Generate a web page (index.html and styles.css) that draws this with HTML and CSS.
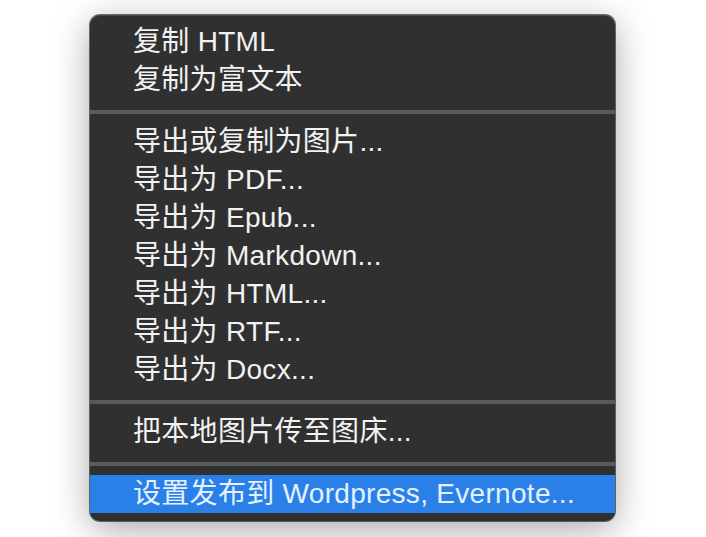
FILE: index.html
```html
<!DOCTYPE html>
<html lang="zh-CN">
<head>
<meta charset="utf-8">
<title>Menu</title>
<link rel="stylesheet" href="styles.css">
</head>
<body>
<div class="stage">
  <div class="menu">
    <div class="item">复制 HTML</div>
    <div class="item">复制为富文本</div>
    <div class="sep"></div>
    <div class="item">导出或复制为图片...</div>
    <div class="item">导出为 PDF...</div>
    <div class="item">导出为 Epub...</div>
    <div class="item">导出为 Markdown...</div>
    <div class="item">导出为 HTML...</div>
    <div class="item">导出为 RTF...</div>
    <div class="item">导出为 Docx...</div>
    <div class="sep"></div>
    <div class="item">把本地图片传至图床...</div>
    <div class="sep"></div>
    <div class="item active">设置发布到 Wordpress, Evernote...</div>
  </div>
</div>
</body>
</html>
```

FILE: styles.css
```css
html, body {
  margin: 0;
  padding: 0;
  background: #ffffff;
}
.stage {
  width: 706px;
  height: 537px;
  padding: 15px 0 0 90px;
  box-sizing: border-box;
  overflow: hidden;
}
.menu {
  width: 525px;
  padding: 8px 0;
  background: #303030;
  border-radius: 10px;
  box-shadow: 0 0 0 1px rgba(0,0,0,0.55), inset 0 1px 0 rgba(255,255,255,0.12), 0 8px 36px rgba(0,0,0,0.35);
  font-family: "Liberation Sans", "Noto Sans CJK SC", sans-serif;
  font-size: 28px;
  letter-spacing: 0.3px;
  color: #f2f2f2;
}
.item {
  height: 38px;
  line-height: 38px;
  padding-left: 43px;
  white-space: nowrap;
}
.item.active {
  background: #2b80e8;
  color: #e3f1ff;
}
.sep {
  height: 4px;
  margin: 11px 0 9px;
  background: #595959;
}
```
